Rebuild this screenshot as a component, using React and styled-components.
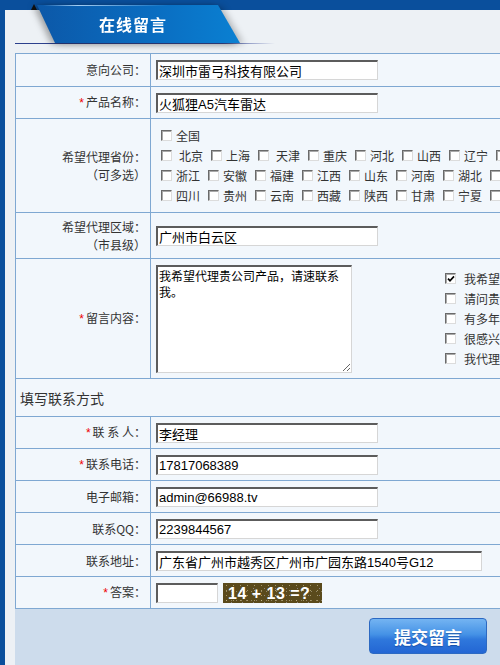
import React from "react";
import styled, { createGlobalStyle } from "styled-components";

const GlobalStyle = createGlobalStyle`
  html, body {
    margin: 0;
    padding: 0;
    overflow: hidden;
    background: #edf1f5;
  }
  body {
    font-family: "Noto Sans CJK SC", "Liberation Sans", sans-serif;
    font-size: 12px;
    color: #333;
  }
`;

const line = "#7fa8d2";

const Page = styled.div`
  min-height: 665px;
  width: 900px;
  border-left: 5px solid #0a4f9c;
  background: #edf1f5;
`;

const Header = styled.div`
  height: 53px;
  box-sizing: border-box;
  padding-top: 5px;
  background: linear-gradient(#0a4f9c 0 10px, transparent 10px);
`;

const TabRow = styled.div`
  display: flex;
  align-items: flex-start;
  padding-left: 26px;
  height: 38px;
`;

const Notch = styled.span`
  width: 0;
  height: 0;
  margin-top: -1px;
  border-left: 3px solid transparent;
  border-right: 3px solid transparent;
  border-bottom: 6px solid #111;
`;

const TabShadow = styled.div`
  filter: drop-shadow(-4px 1px 3px rgba(0, 0, 0, 0.28))
    drop-shadow(4px 1px 3px rgba(0, 0, 0, 0.22));
`;

const Tab = styled.div`
  width: 203px;
  height: 38px;
  clip-path: polygon(0 0, 181px 0, 203px 38px, 18px 38px);
  background:
    linear-gradient(90deg, transparent 3%, rgba(190, 225, 255, 0.85) 20%, transparent 65%) top / 100% 1px no-repeat,
    linear-gradient(90deg, #0c58a8, #0a6cc0 55%, #0a80d2);
  display: flex;
  align-items: center;
  justify-content: center;
  padding-right: 11px;
  box-sizing: border-box;
  color: #fff;
  font-size: 16px;
  font-weight: bold;
  letter-spacing: 1px;
`;

const Underline = styled.div`
  margin-left: 10px;
  width: 260px;
  height: 1px;
  background: linear-gradient(90deg, #2b3f8c, #3a4c9a 80%, rgba(58, 76, 154, 0));
`;

const Panel = styled.div`
  margin-left: 10px;
  width: 826px;
`;

const Table = styled.div`
  border: 1px solid ${line};
  border-bottom: none;
  background: #f2f7fc;
`;

const Row = styled.div`
  display: grid;
  grid-template-columns: 135px 1fr;
  height: ${(p) => p.$h || 32}px;
  box-sizing: border-box;
  border-bottom: 1px solid ${line};
`;

const Label = styled.div`
  display: flex;
  flex-direction: column;
  justify-content: center;
  align-items: flex-end;
  padding-right: 4px;
  border-right: 1px solid ${line};
  line-height: 18px;
  color: #333;
  white-space: nowrap;
`;

const Star = styled.span`
  color: #e00;
  font-family: "Liberation Sans", sans-serif;
  margin-right: 2px;
`;

const Cell = styled.div`
  display: flex;
  align-items: center;
  gap: 5px;
  padding-left: 5px;
  overflow: hidden;
`;

const SectionRow = styled.div`
  height: 38px;
  box-sizing: border-box;
  border-bottom: 1px solid ${line};
  display: flex;
  align-items: center;
  padding-left: 4px;
  font-size: 14px;
  color: #333;
`;

const field = `
  box-sizing: border-box;
  border-style: solid;
  border-width: 2px 1px 1px 2px;
  border-color: #5c5c5c #d6d6d6 #d6d6d6 #5c5c5c;
  background: #fff;
  color: #000;
  outline: none;
  margin: 0;
`;

const TextInput = styled.input`
  ${field}
  width: ${(p) => p.$w || 222}px;
  height: 20px;
  padding: 0 1px;
  font-family: "Liberation Sans", "Noto Sans CJK SC", sans-serif;
  font-size: 13px;
`;

const TextArea = styled.textarea`
  ${field}
  width: 196px;
  height: 108px;
  padding: 1px;
  font-family: "Noto Sans CJK SC", sans-serif;
  font-size: 12px;
  line-height: 16px;
  flex-shrink: 0;
`;

const Provinces = styled.div`
  display: flex;
  flex-direction: column;
  padding-left: 5px;
`;

const CheckLine = styled.div`
  display: flex;
  align-items: center;
  height: 20px;
  white-space: nowrap;
`;

const Item = styled.span`
  display: inline-flex;
  align-items: center;
  margin-right: 8px;
  flex-shrink: 0;
`;

const Box = styled.span`
  width: 11px;
  height: 11px;
  box-sizing: border-box;
  border: 1px solid;
  border-color: #6a6a6a #dcdcdc #dcdcdc #6a6a6a;
  box-shadow: inset 1px 1px 0 #a9a9a9;
  background: #fff;
  display: inline-flex;
  align-items: center;
  justify-content: center;
  flex-shrink: 0;
`;

const ItemText = styled.span`
  margin-left: ${(p) => (p.$pad ? 7 : 4)}px;
  line-height: 20px;
  color: #333;
`;

const MsgWrap = styled.div`
  display: flex;
  align-items: center;
  gap: 93px;
`;

const Options = styled.div`
  display: flex;
  flex-direction: column;
`;

const OptionText = styled.span`
  margin-left: 8px;
  line-height: 20px;
  color: #333;
  white-space: nowrap;
`;

const Captcha = styled.span`
  display: inline-flex;
  align-items: center;
  width: 99px;
  height: 20px;
  box-sizing: border-box;
  padding: 3px 0 0 5px;
  background-color: #5a4a1c;
  background-image:
    radial-gradient(circle, rgba(230, 220, 170, 0.55) 0.6px, transparent 0.9px),
    radial-gradient(circle, rgba(200, 200, 255, 0.45) 0.6px, transparent 0.9px),
    radial-gradient(circle, rgba(255, 255, 255, 0.35) 0.5px, transparent 0.8px);
  background-size: 7px 5px, 11px 7px, 5px 9px;
  background-position: 0 0, 3px 2px, 1px 4px;
  color: #fff;
  font-family: "Liberation Sans", sans-serif;
  font-weight: bold;
  font-size: 16px;
  letter-spacing: 0.5px;
  white-space: pre;
`;

const Footer = styled.div`
  height: 60px;
  background: #cddcec;
  display: flex;
  justify-content: center;
  align-items: flex-start;
  padding-top: 9px;
`;

const SubmitButton = styled.button`
  width: 118px;
  height: 36px;
  border: 1px solid #2c69c2;
  border-radius: 4px;
  background: linear-gradient(#74b4f2, #4592e6 45%, #2f78dc 60%, #2366d4);
  color: #fff;
  font-family: "Noto Sans CJK SC", sans-serif;
  font-size: 17px;
  font-weight: bold;
  text-shadow: 0 1px 1px rgba(0, 40, 110, 0.45);
  padding: 0;
  cursor: pointer;
`;

const Check = ({ checked }) => (
  <Box>
    {checked && (
      <svg width="8" height="8" viewBox="0 0 8 8">
        <path d="M1 3.6 L3 5.8 L7 1.4" fill="none" stroke="#000" strokeWidth="1.7" />
      </svg>
    )}
  </Box>
);

const provinceRows = [
  ["全国"],
  ["北京", "上海", "天津", "重庆", "河北", "山西", "辽宁", "吉林", "黑龙江", "江苏"],
  ["浙江", "安徽", "福建", "江西", "山东", "河南", "湖北", "湖南", "广东", "海南"],
  ["四川", "贵州", "云南", "西藏", "陕西", "甘肃", "宁夏", "青海", "新疆", "内蒙古"],
];
const padded = new Set(["北京", "天津"]);

const messages = [
  { text: "我希望代理贵公司产品，请速联系我。", checked: true },
  { text: "请问贵公司产品的代理条件是什么？" },
  { text: "有多年代理经验，希望与贵公司合作。" },
  { text: "很感兴趣，请寄详细资料给我。" },
  { text: "我代理过同类产品，有销售渠道。" },
];

const contacts = [
  { label: "联 系 人：", value: "李经理", req: true },
  { label: "联系电话：", value: "17817068389", req: true },
  { label: "电子邮箱：", value: "admin@66988.tv" },
  { label: "联系QQ：", value: "2239844567" },
  { label: "联系地址：", value: "广东省广州市越秀区广州市广园东路1540号G12", w: 326 },
];

export default function App() {
  return (
    <>
      <GlobalStyle />
      <Page>
        <Header>
          <TabRow>
            <Notch />
            <TabShadow>
              <Tab>在线留言</Tab>
            </TabShadow>
          </TabRow>
          <Underline />
        </Header>

        <Panel>
          <Table>
            <Row $h={33}>
              <Label>意向公司：</Label>
              <Cell>
                <TextInput defaultValue="深圳市雷弓科技有限公司" />
              </Cell>
            </Row>
            <Row>
              <Label>
                <span>
                  <Star>*</Star>产品名称：
                </span>
              </Label>
              <Cell>
                <TextInput defaultValue="火狐狸A5汽车雷达" />
              </Cell>
            </Row>
            <Row $h={94}>
              <Label>
                <span>希望代理省份：</span>
                <span>（可多选）</span>
              </Label>
              <Cell>
                <Provinces>
                  {provinceRows.map((row, i) => (
                    <CheckLine key={i}>
                      {row.map((name) => (
                        <Item key={name}>
                          <Check />
                          <ItemText $pad={padded.has(name)}>{name}</ItemText>
                        </Item>
                      ))}
                    </CheckLine>
                  ))}
                </Provinces>
              </Cell>
            </Row>
            <Row $h={46}>
              <Label>
                <span>希望代理区域：</span>
                <span>（市县级）</span>
              </Label>
              <Cell>
                <TextInput defaultValue="广州市白云区" />
              </Cell>
            </Row>
            <Row $h={120}>
              <Label>
                <span>
                  <Star>*</Star>留言内容：
                </span>
              </Label>
              <Cell>
                <MsgWrap>
                  <TextArea defaultValue="我希望代理贵公司产品，请速联系我。" />
                  <Options>
                    {messages.map((m) => (
                      <CheckLine key={m.text}>
                        <Check checked={m.checked} />
                        <OptionText>{m.text}</OptionText>
                      </CheckLine>
                    ))}
                  </Options>
                </MsgWrap>
              </Cell>
            </Row>

            <SectionRow>填写联系方式</SectionRow>

            {contacts.map((c) => (
              <Row key={c.label}>
                <Label>
                  <span>
                    {c.req && <Star>*</Star>}
                    {c.label}
                  </span>
                </Label>
                <Cell>
                  <TextInput defaultValue={c.value} $w={c.w} />
                </Cell>
              </Row>
            ))}
            <Row>
              <Label>
                <span>
                  <Star>*</Star>答案：
                </span>
              </Label>
              <Cell>
                <TextInput $w={62} />
                <Captcha>14 + 13 =?</Captcha>
              </Cell>
            </Row>
          </Table>
          <Footer>
            <SubmitButton type="button">提交留言</SubmitButton>
          </Footer>
        </Panel>
      </Page>
    </>
  );
}
